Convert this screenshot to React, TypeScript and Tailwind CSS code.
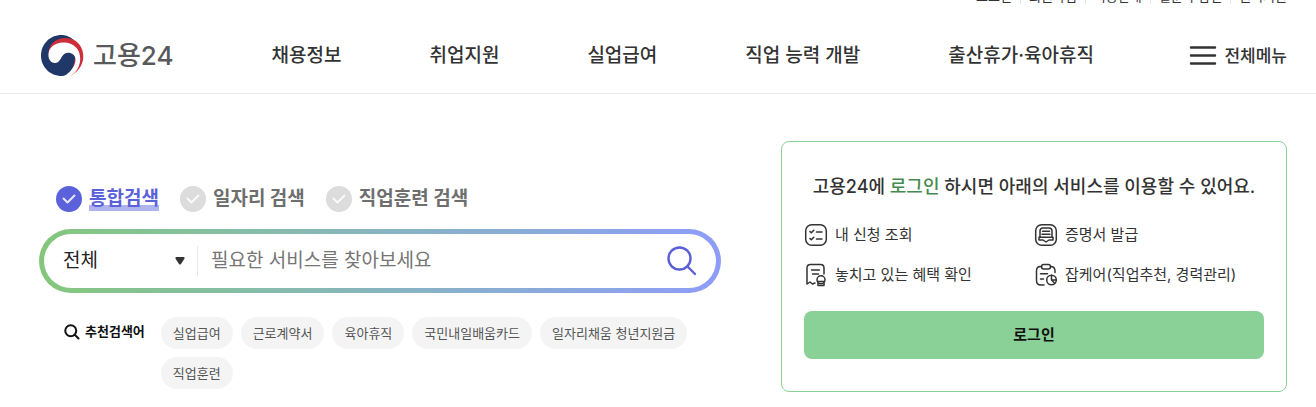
import type { ReactNode } from "react";

const topLinks = ["로그인", "회원가입", "이용안내", "질문과 답변", "원격지원"];
const menus = ["채용정보", "취업지원", "실업급여", "직업 능력 개발", "출산휴가·육아휴직"];
const searchTypes = ["통합검색", "일자리 검색", "직업훈련 검색"];
const keywords = ["실업급여", "근로계약서", "육아휴직", "국민내일배움카드", "일자리채움 청년지원금", "직업훈련"];

function Logo() {
  return (
    <svg viewBox="0 0 44 42" className="h-[42px] w-11" aria-hidden="true">
      <path d="M33 5C28 1 24 0 20.5 0C9 0 0 9 0 20.5C0 32 9 41 20.5 41C25 41 29 39 32 36L38 20Z" fill="#1f3867" />
      <path d="M7.5 20C7 10 14 3.5 23 3C27 2.8 30 3.5 33 5C39 8 42.5 15 42.3 22C42 30 37 37 30 40.5L35 20L20 9Z" fill="#cd2e3a" />
      <path d="M7.5 19C8 12 14 8 22 7.5C32 7 39.5 14 39.2 24C39 32 35 37.5 29.5 41L23 41C29 38 34.5 31 34.5 24.5C34.3 19 28.5 16.5 24 18.5C20 20.5 20 27 14.5 28C10 28.5 7 24 7.5 19Z" fill="#fff" />
    </svg>
  );
}

function SearchIcon({ className }: { className: string }) {
  return (
    <svg viewBox="0 0 32 32" className={className} fill="none" stroke="currentColor" aria-hidden="true">
      <circle cx="13.5" cy="13.5" r="11" />
      <path d="M21.5 21.5L29 29" strokeLinecap="round" />
    </svg>
  );
}

function ServiceIcon({ children }: { children: ReactNode }) {
  return (
    <svg
      viewBox="0 0 24 24"
      className="size-6 shrink-0"
      fill="none"
      stroke="#333"
      strokeWidth="1.5"
      strokeLinecap="round"
      strokeLinejoin="round"
      aria-hidden="true"
    >
      {children}
    </svg>
  );
}

const services = [
  {
    label: "내 신청 조회",
    icon: (
      <>
        <rect x="1.7" y="1.7" width="20.6" height="20.6" rx="6" />
        <path d="M6 8.6L7.3 9.8L9.8 7.2M6 15.6L7.3 16.8L9.8 14.2M12.5 9H18M12.5 16H18" />
      </>
    ),
  },
  {
    label: "증명서 발급",
    icon: (
      <>
        <rect x="1.7" y="1.7" width="20.6" height="20.6" rx="6" />
        <path d="M6 14V8Q6 5 9 5H15Q18 5 18 8V14M8.5 8.3H15.5M8 11.2H16M5 14.3H19M5 14.3V17H9L12 19L15 17H19V14.3" />
      </>
    ),
  },
  {
    label: "놓치고 있는 혜택 확인",
    icon: (
      <>
        <path d="M3 21V5Q3 1.5 6.5 1.5H16.5Q20 1.5 20 5V11M3 21L6 19L8.5 21L11 20M7.5 7H15.5M8.5 11H14.5" />
        <circle cx="17" cy="16.8" r="4" />
        <path d="M14 20V22.5H20V20M14 18.5H20" />
      </>
    ),
  },
  {
    label: "잡케어(직업추천, 경력관리)",
    icon: (
      <>
        <path d="M7.5 3.5H6.5Q2.5 3.5 2.5 8V17.5Q2.5 22 7 22H10M16.5 3.5Q21 3.5 21 8V9.5M6.5 10.8H13.5M6.5 16H9.5" />
        <rect x="7.5" y="1.5" width="9" height="4.5" rx="2.2" />
        <circle cx="17.5" cy="17" r="4.8" />
        <path d="M17.5 12.2V17L20.5 20M17.5 17H22" />
      </>
    ),
  },
];

function Header() {
  return (
    <header className="border-b border-[#ebebeb]">
      <div className="flex h-1 items-end justify-end overflow-hidden pr-[29px]">
        <nav aria-label="바로가기" className="flex text-[13px] leading-4">
          {topLinks.map((link, i) => (
            <a
              key={link}
              href="#"
              className={i === 0 ? "pr-2" : i === topLinks.length - 1 ? "border-l border-[#e5e5e5] pl-2" : "border-l border-[#e5e5e5] px-2"}
            >
              {link}
            </a>
          ))}
        </nav>
      </div>
      <div className="flex items-center pt-[31px] pr-[29px] pb-4 pl-[41px]">
        <a href="#" className="flex items-center gap-2 text-[26px] leading-10 font-medium text-[#58595b]">
          <Logo />
          고용24
        </a>
        <nav aria-label="주메뉴" className="ml-[98px] flex gap-[88px] text-[19px] leading-7 font-medium">
          {menus.map((menu) => (
            <a key={menu} href="#" className="whitespace-nowrap">
              {menu}
            </a>
          ))}
        </nav>
        <button type="button" className="ml-auto flex items-center gap-[7px] text-[17px] leading-6 font-medium">
          <svg viewBox="0 0 28 20" className="h-5 w-7" stroke="#333" strokeWidth="2.4" strokeLinecap="round" aria-hidden="true">
            <path d="M2 1.5H26M2 9.5H26M2 17.5H26" />
          </svg>
          전체메뉴
        </button>
      </div>
    </header>
  );
}

function SearchPanel() {
  return (
    <section className="mt-[45px] w-[682px] shrink-0">
      <div className="flex gap-[21px] pl-[17px]">
        {searchTypes.map((type, i) => (
          <label key={type} className="group flex items-center gap-[7px] text-[19px] leading-7 font-bold text-[#6e6e6e]">
            <span className="grid size-[26px] place-items-center rounded-full bg-[#dcdcdc] group-has-checked:bg-[#5b62d9]">
              <input type="radio" name="searchType" defaultChecked={i === 0} className="sr-only" />
              <svg viewBox="0 0 14 10" className="h-[10px] w-[14px]" fill="none" stroke="#fff" strokeOpacity=".85" strokeWidth="2" strokeLinecap="round" strokeLinejoin="round">
                <path d="M1.5 4.5L5.5 8.5L12.5 1.5" />
              </svg>
            </span>
            <span className="leading-6 group-has-checked:bg-linear-to-t group-has-checked:from-[#b0b4ee] group-has-checked:from-25% group-has-checked:to-transparent group-has-checked:to-25% group-has-checked:text-[#5b62d9]">
              {type}
            </span>
          </label>
        ))}
      </div>
      <form className="mt-[17px] rounded-full bg-linear-to-r from-[#84c77b] to-[#8e9cf8] p-[5px]">
        <div className="flex h-[54px] items-center rounded-full bg-white pr-[18px] pl-[19px] text-[19px]">
          <div className="flex w-[135px] items-center border-r border-[#e8e8e8]">
            <select aria-label="검색 범위" className="h-[30px] w-full appearance-none text-[#222]">
              <option>전체</option>
            </select>
            <svg viewBox="0 0 10 8" className="mr-3 h-2 w-[10px] shrink-0" fill="#333" aria-hidden="true">
              <path d="M1.5 0H8.5Q10 .3 9.4 1.7L6 7Q5 8.2 4 7L.6 1.7Q0 .3 1.5 0Z" />
            </svg>
          </div>
          <input
            type="text"
            aria-label="검색어"
            placeholder="필요한 서비스를 찾아보세요"
            className="min-w-0 flex-1 px-[13px] leading-7 outline-none placeholder:text-[#757575]"
          />
          <button type="submit" aria-label="검색" className="text-[#5b5fd6]">
            <SearchIcon className="size-8 stroke-[2.4]" />
          </button>
        </div>
      </form>
      <div className="mt-6 flex pl-[25px]">
        <strong className="flex h-[30px] shrink-0 items-center gap-[5px] text-[13px] font-bold text-[#111]">
          <SearchIcon className="size-4 stroke-4" />
          추천검색어
        </strong>
        <ul className="ml-4 flex flex-wrap gap-2">
          {keywords.map((keyword) => (
            <li key={keyword}>
              <a href="#" className="block rounded-full bg-[#f4f4f4] px-3 text-[13px] leading-8 text-[#555]">
                {keyword}
              </a>
            </li>
          ))}
        </ul>
      </div>
    </section>
  );
}

function LoginPanel() {
  return (
    <section className="ml-[60px] flex-1 rounded-lg border border-[#8ad197] px-[22px] pt-[31px] pb-8">
      <h2 className="text-center text-[18px] leading-7 font-medium whitespace-nowrap">
        고용24에 <span className="text-[#448b4f]">로그인</span> 하시면 아래의 서비스를 이용할 수 있어요.
      </h2>
      <ul className="mt-[22px] grid grid-cols-2 gap-y-4 text-[15px] leading-6">
        {services.map(({ label, icon }) => (
          <li key={label}>
            <a href="#" className="flex items-center gap-[7px] whitespace-nowrap">
              <ServiceIcon>{icon}</ServiceIcon>
              {label}
            </a>
          </li>
        ))}
      </ul>
      <button type="button" className="mt-6 h-12 w-full rounded-lg bg-[#8ad197] text-[15px] font-bold text-[#111]">
        로그인
      </button>
    </section>
  );
}

export default function App() {
  return (
    <div className="bg-white font-[Inter,'Noto_Sans_CJK_KR',sans-serif] text-[#333]">
      <Header />
      <main className="flex items-start pt-[47px] pr-[29px] pl-[39px]">
        <SearchPanel />
        <LoginPanel />
      </main>
    </div>
  );
}
